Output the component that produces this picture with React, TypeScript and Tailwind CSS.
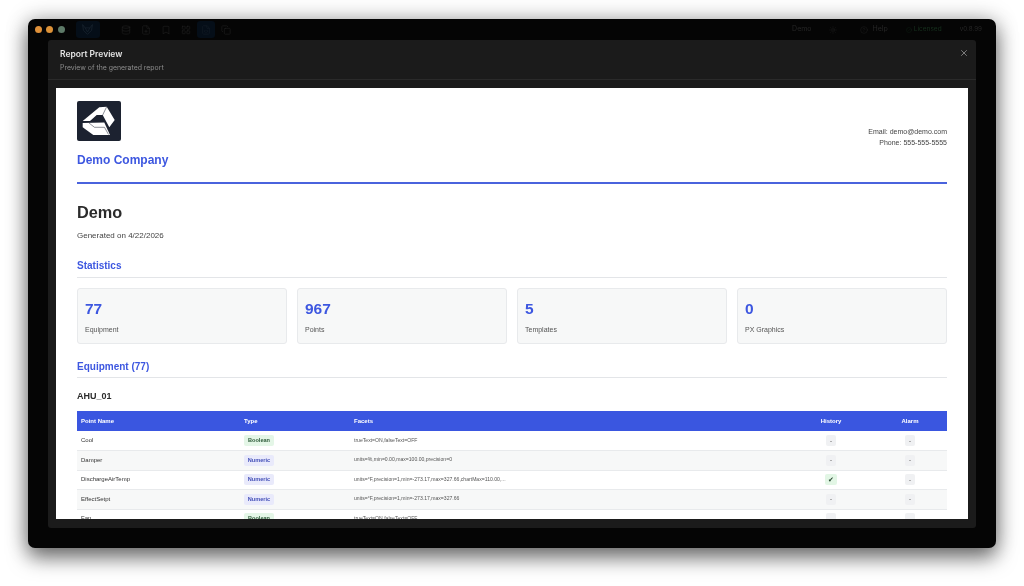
import { CircleCheck, CircleHelp, Copy, Database, FileCode, FilePlus, Bookmark, LayoutGrid, Sun, X } from "lucide-react"

const stats = [
  { value: "77", label: "Equipment" },
  { value: "967", label: "Points" },
  { value: "5", label: "Templates" },
  { value: "0", label: "PX Graphics" },
]

const rows = [
  { name: "Cool", type: "Boolean", facets: "trueText=ON,falseText=OFF", history: false },
  { name: "Damper", type: "Numeric", facets: "units=%,min=0.00,max=100.00,precision=0", history: false },
  { name: "DischargeAirTemp", type: "Numeric", facets: "units=°F,precision=1,min=-273.17,max=327.66,chartMax=110.00,...", history: true },
  { name: "EffectSetpt", type: "Numeric", facets: "units=°F,precision=1,min=-273.17,max=327.66", history: false },
  { name: "Fan", type: "Boolean", facets: "trueText=ON,falseText=OFF", history: false },
]

function Logo() {
  return (
    <div className="h-[40px] w-[44px] rounded-[2px] bg-[#1c2230]">
      <svg viewBox="0 0 44 40" className="h-[40px] w-[44px]">
        <path d="M5.7 20 L22.3 6.3 L29.7 5.7 L37.7 19 L32.3 26.3 L25.7 14 H19.7 L13 20 Z" fill="#fff" />
        <path d="M5.7 22 L27.3 21.5 L33 34 H16.3 L5.7 26.3 Z" fill="#fff" />
        <path d="M29.7 5.7 L25.7 14 M12 22 L17.5 26.3 H27.5 L31.5 33.5" stroke="#1c2230" strokeWidth="0.5" fill="none" />
      </svg>
    </div>
  )
}

function Dash() {
  return (
    <span className="inline-flex h-[11px] w-[10px] items-center justify-center rounded-[2px] bg-[#f0f1f3] text-[6px] leading-none text-[#444]">
      -
    </span>
  )
}

export default function App() {
  return (
    <div className="h-[586px] w-[1024px] overflow-hidden bg-white px-[28px] pt-[19px] font-['Inter',sans-serif] blur-[0.35px]">
      <div className="h-[529px] w-[968px] rounded-[7px] bg-[#050505] shadow-[0_10px_20px_rgba(0,0,0,0.5),0_0_22px_rgba(0,0,0,0.28)]">
        {/* Title bar */}
        <div className="flex h-[21px] items-center pl-[6.5px] pr-[14px] text-[#262626]">
          <div className="flex items-center gap-[4.5px]">
            <span className="h-[7px] w-[7px] rounded-full bg-[#e0913a]" />
            <span className="h-[7px] w-[7px] rounded-full bg-[#dd9238]" />
            <span className="h-[7px] w-[7px] rounded-full bg-[#5e7a68]" />
          </div>
          <div className="ml-[11px] flex h-[17px] w-[24px] items-center justify-center rounded-[3px] bg-[#050e18]">
            <svg viewBox="0 0 16 16" className="h-[13px] w-[13px]" fill="none" stroke="#18222e" strokeWidth="1">
              <path d="M2 2 L5 6 H11 L14 2 L13 9 L8 14 L3 9 Z M5 6 L8 11 L11 6" />
            </svg>
          </div>
          <div className="ml-[21px] flex items-center gap-[10px]">
            <Database size={10} strokeWidth={1.2} />
            <FilePlus size={10} strokeWidth={1.2} />
            <Bookmark size={10} strokeWidth={1.2} />
            <LayoutGrid size={10} strokeWidth={1.2} />
            <div className="-mx-[4px] flex h-[17px] w-[18px] items-center justify-center rounded-[3px] bg-[#050e18]">
              <FileCode size={10} strokeWidth={1.2} className="text-[#18202b]" />
            </div>
            <Copy size={10} strokeWidth={1.2} />
          </div>
          <div className="ml-auto flex items-center text-[7px]">
            <span>Demo</span>
            <Sun size={8} strokeWidth={1.2} className="ml-[17px]" />
            <CircleHelp size={8} strokeWidth={1.2} className="ml-[23px]" />
            <span className="ml-[5px]">Help</span>
            <CircleCheck size={6} strokeWidth={1.2} className="ml-[18px] text-[#16301d]" />
            <span className="ml-[2px] text-[6.5px] text-[#16301d]">Licensed</span>
            <span className="ml-[18px] text-[6.3px]">v0.8.99</span>
          </div>
        </div>

        {/* Modal */}
        <div className="mx-[20px] h-[488px] w-[928px] rounded-[3px] bg-[#1b1b1b]">
          <div className="relative h-[40px] border-b border-[#2a2a2a] pl-[12px] pt-[8px]">
            <div className="text-[8.5px] font-semibold leading-[12px] text-[#e4e4e4]">Report Preview</div>
            <div className="mt-[3px] text-[6.9px] leading-[9px] text-[#8c8c8c]">Preview of the generated report</div>
            <X size={10} strokeWidth={1.5} className="absolute right-[7.5px] top-[7.5px] text-[#b5b5b5]" />
          </div>

          {/* Report */}
          <div className="mx-[8px] mt-[8px] h-[431px] overflow-hidden bg-white px-[21px] pt-[13px] font-['Liberation_Sans',sans-serif]">
            <div className="flex h-[83px] items-start justify-between border-b-2 border-[#4a63dd]">
              <div>
                <Logo />
                <div className="mt-[11px] text-[12px] font-bold leading-[16px] text-[#3d57e0]">Demo Company</div>
              </div>
              <div className="mt-[24.5px] text-right text-[7px] leading-[11.5px] text-[#444]">
                <div>Email: demo@demo.com</div>
                <div>Phone: 555-555-5555</div>
              </div>
            </div>

            <h1 className="mt-[18px] text-[16.3px] font-bold leading-[20px] text-[#2b2b2b]">Demo</h1>
            <p className="mt-[8px] text-[8px] leading-[12px] text-[#444]">Generated on 4/22/2026</p>

            <h2 className="mt-[17px] h-[19px] border-b border-[#e3e5e8] text-[10px] font-bold leading-[14px] text-[#3d57e0]">Statistics</h2>

            <div className="mt-[10px] grid grid-cols-4 gap-[10px]">
              {stats.map((s) => (
                <div key={s.label} className="h-[56px] rounded-[3px] border border-[#e8eaec] bg-[#f7f8f8] pl-[7px] pt-[10px]">
                  <div className="text-[15.5px] font-bold leading-[20px] text-[#3d57e0]">{s.value}</div>
                  <div className="mt-[5px] text-[7px] leading-[11px] text-[#555]">{s.label}</div>
                </div>
              ))}
            </div>

            <h2 className="mt-[17px] h-[17px] border-b-[1.5px] border-[#e3e5e8] text-[10px] font-bold leading-[12px] text-[#3d57e0]">Equipment (77)</h2>

            <h3 className="mt-[12px] text-[9px] font-bold leading-[12px] text-[#2b2b2b]">AHU_01</h3>

            <table className="mt-[9px] w-full table-fixed border-collapse text-[6px]">
              <colgroup>
                <col className="w-[167px]" />
                <col className="w-[110px]" />
                <col className="w-[435px]" />
                <col className="w-[84px]" />
                <col className="w-[74px]" />
              </colgroup>
              <thead>
                <tr className="h-[20px] bg-[#3a56e0] text-[6px] font-bold text-white">
                  <th className="pl-[4px] text-left font-bold">Point Name</th>
                  <th className="text-left font-bold">Type</th>
                  <th className="text-left font-bold">Facets</th>
                  <th className="text-center font-bold">History</th>
                  <th className="text-center font-bold">Alarm</th>
                </tr>
              </thead>
              <tbody>
                {rows.map((r, i) => (
                  <tr key={r.name} className={`h-[19.5px] border-b border-[#e8eaec] ${i % 2 === 1 ? "bg-[#f7f8f8]" : "bg-white"}`}>
                    <td className="pl-[4px] text-[#333]">{r.name}</td>
                    <td>
                      <span
                        className={`inline-block h-[11px] w-[30px] rounded-[2px] text-center text-[5.6px] font-bold leading-[11px] ${
                          r.type === "Boolean" ? "bg-[#e4f6e7] text-[#2c5a38]" : "bg-[#e9eafb] text-[#4450b8]"
                        }`}
                      >
                        {r.type}
                      </span>
                    </td>
                    <td className="text-[5.1px] text-[#555]">{r.facets}</td>
                    <td className="text-center">
                      {r.history ? (
                        <span className="inline-flex h-[11px] w-[12px] items-center justify-center rounded-[2px] bg-[#e2f6e5] text-[7px] leading-none text-[#2a4a33]">
                          ✔
                        </span>
                      ) : (
                        <Dash />
                      )}
                    </td>
                    <td className="text-center">
                      <Dash />
                    </td>
                  </tr>
                ))}
              </tbody>
            </table>
          </div>
        </div>
      </div>
    </div>
  )
}
